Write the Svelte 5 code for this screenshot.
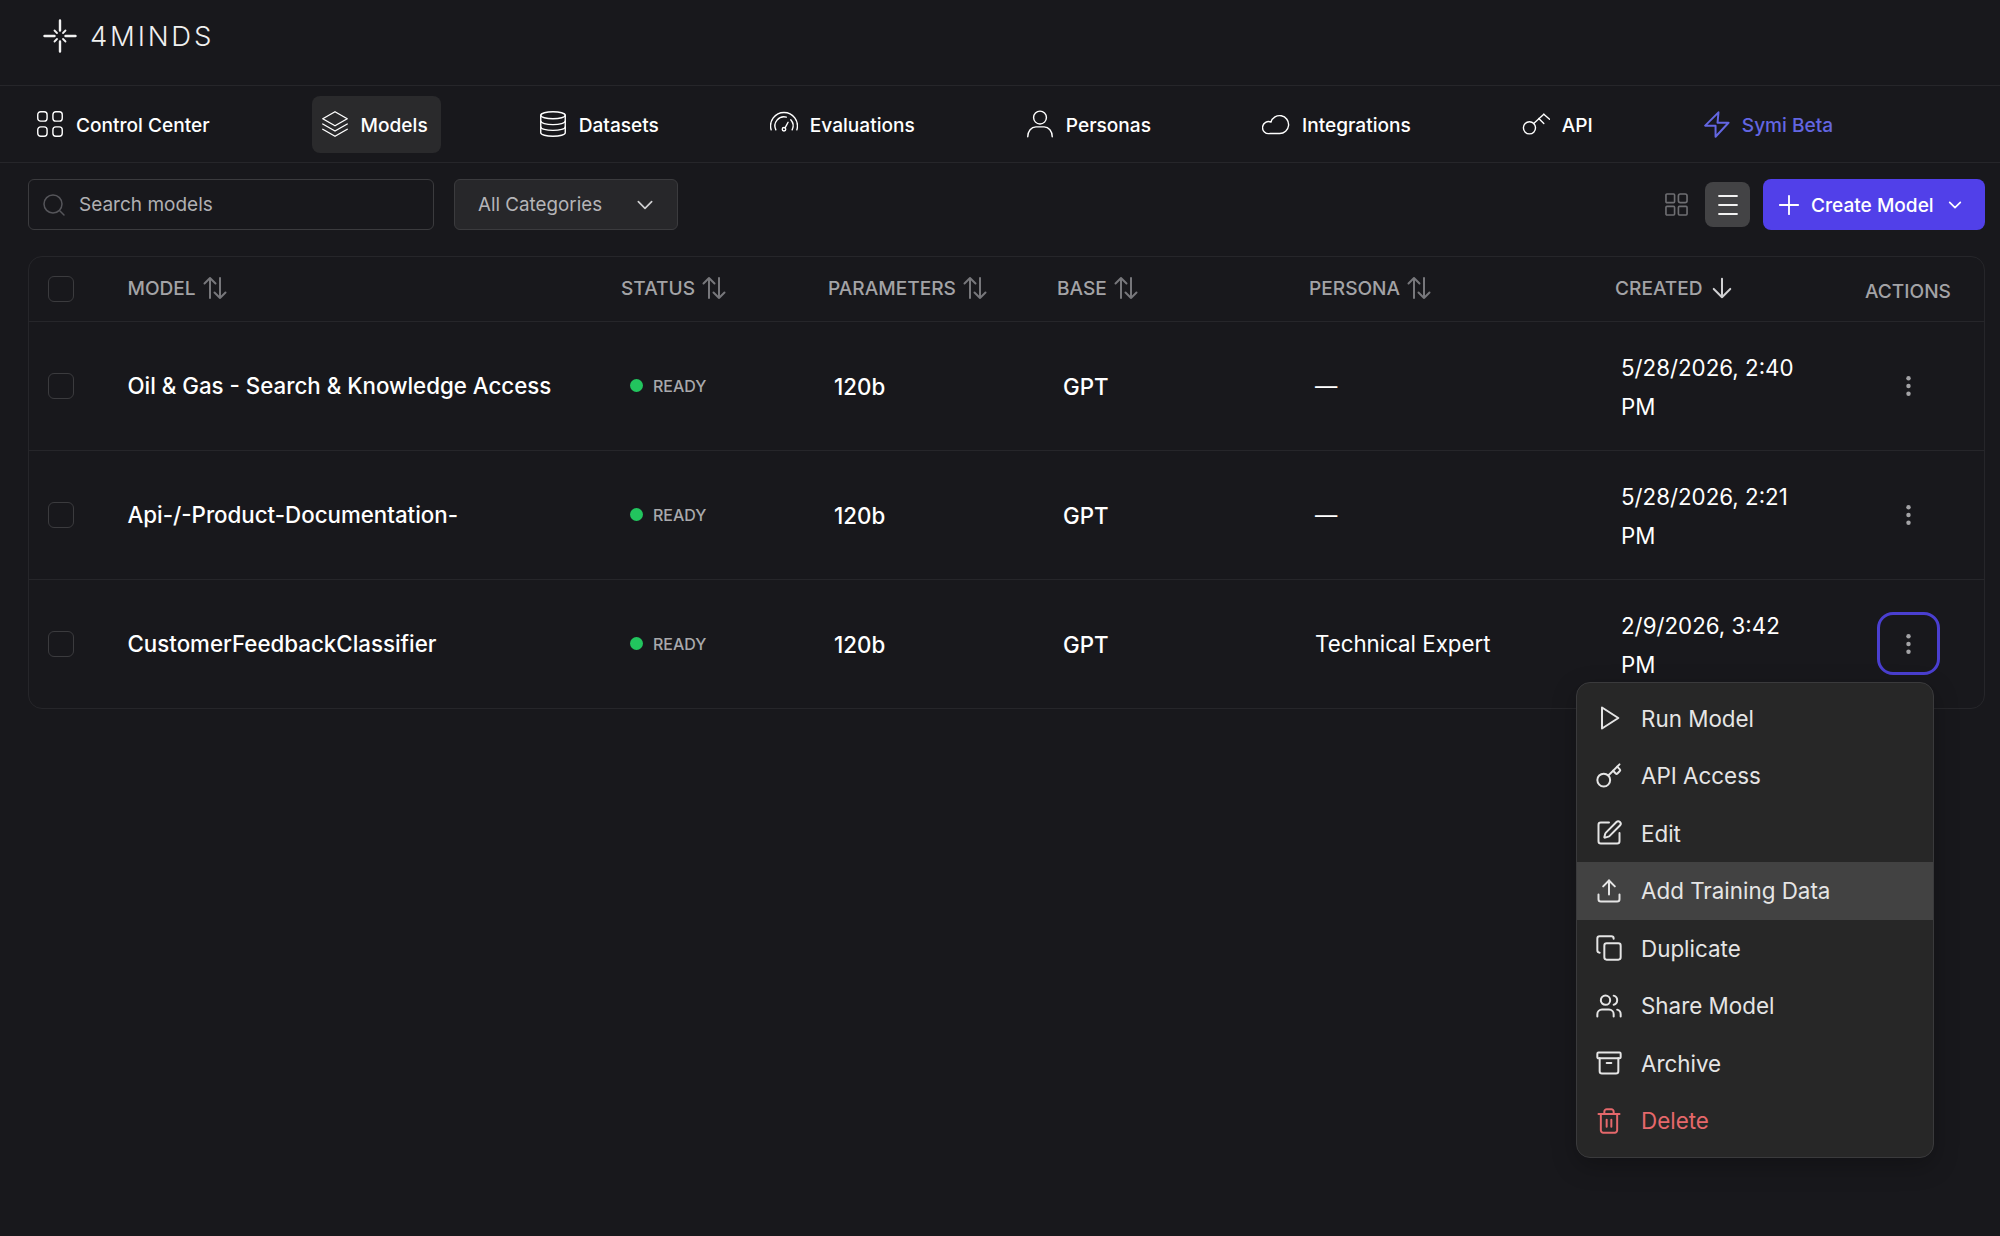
<script lang="ts">
  const icons: Record<string, string[]> = {
    center: ['M4 1.500h3a2.500 2.500 0 0 1 2.500 2.500v3a2.500 2.500 0 0 1-2.500 2.500h-3a2.500 2.500 0 0 1-2.500-2.500v-3a2.500 2.500 0 0 1 2.500-2.500z', 'M17 1.500h3a2.500 2.500 0 0 1 2.500 2.500v3a2.500 2.500 0 0 1-2.500 2.500h-3a2.500 2.500 0 0 1-2.500-2.500v-3a2.500 2.500 0 0 1 2.500-2.500z', 'M4 14.500h3a2.500 2.500 0 0 1 2.500 2.500v3a2.500 2.500 0 0 1-2.500 2.500h-3a2.500 2.500 0 0 1-2.500-2.500v-3a2.500 2.500 0 0 1 2.500-2.500z', 'M17 14.500h3a2.500 2.500 0 0 1 2.500 2.500v3a2.500 2.500 0 0 1-2.500 2.500h-3a2.500 2.500 0 0 1-2.500-2.500v-3a2.500 2.500 0 0 1 2.500-2.500z'],
    layers: ['M12 1.500 22.500 7.500 12 13.500 1.500 7.500z', 'M1.500 12 12 18 22.500 12', 'M1.500 16.500 12 22.500 22.500 16.500'],
    database: ['M12 1.500c5.800 0 10.500 1.300 10.500 3s-4.700 3-10.500 3-10.500-1.300-10.500-3 4.700-3 10.500-3z', 'M1.500 4.500v15c0 1.700 4.700 3 10.500 3s10.500-1.300 10.500-3v-15', 'M1.500 9.500c0 1.700 4.700 3 10.500 3s10.500-1.300 10.500-3', 'M1.500 14.500c0 1.700 4.700 3 10.500 3s10.500-1.300 10.500-3'],
    gauge: ['M1 17A11.500 11.500 0 1 1 23 17', 'M5 17A7.800 7.800 0 0 1 14 6.100', 'M17.800 8.400A7.800 7.800 0 0 1 19 17', 'M12.900 15.300L15.500 10.500', 'M13.500 16.500a1.500 1.500 0 1 1-3 0 1.500 1.500 0 0 1 3 0z'],
    person: ['M17.500 6.500a5.500 5.500 0 1 1-11 0 5.500 5.500 0 0 1 11 0z', 'M1.500 23c0-5 3-8.500 7-8.500h7c4 0 7 3.500 7 8.500'],
    cloud: ['M6.500 20.200H15.100a7.700 7.700 0 1 0-7.380-9.900 5.200 5.200 0 1 0-1.220 9.900Z'],
    apikey: ['M11.600 15.300a5.200 5.200 0 1 1-10.400 0 5.200 5.200 0 0 1 10.400 0z', 'M10 11.500 18.700 3.600', 'M18.700 3.600 23.600 7.900', 'M14.400 7.300 18.700 11.600'],
    zap: ['M12.400 2 1 13.400h8.900l0 9.500L21 10.900h-9.400z'],
    play: ['M6 3 20 12 6 21z'],
    key: ['m15.500 7.500 2.300 2.300a1 1 0 0 0 1.400 0l2.100-2.100a1 1 0 0 0 0-1.400L19 4', 'm21 2-9.600 9.600', 'M13 15.500a5.500 5.500 0 1 1-11 0 5.500 5.500 0 0 1 11 0z'],
    pen: ['M12 3H5a2 2 0 0 0-2 2v14a2 2 0 0 0 2 2h14a2 2 0 0 0 2-2v-7', 'M18.375 2.625a1 1 0 0 1 3 3l-9.013 9.014a2 2 0 0 1-.853.505l-2.873.84a.5.5 0 0 1-.62-.62l.84-2.873a2 2 0 0 1 .506-.852z'],
    upload: ['M21 15v4a2 2 0 0 1-2 2H5a2 2 0 0 1-2-2v-4', 'M17 8l-5-5-5 5', 'M12 3v12'],
    copy: ['M10 8h10a2 2 0 0 1 2 2v10a2 2 0 0 1-2 2H10a2 2 0 0 1-2-2V10a2 2 0 0 1 2-2z', 'M4 16c-1.100 0-2-.9-2-2V4c0-1.100.9-2 2-2h10c1.100 0 2 .9 2 2'],
    users: ['M16 21v-2a4 4 0 0 0-4-4H6a4 4 0 0 0-4 4v2', 'M13 7a4 4 0 1 1-8 0 4 4 0 0 1 8 0z', 'M22 21v-2a4 4 0 0 0-3-3.870', 'M16 3.130a4 4 0 0 1 0 7.750'],
    archive: ['M3 3h18a1 1 0 0 1 1 1v3a1 1 0 0 1-1 1H3a1 1 0 0 1-1-1V4a1 1 0 0 1 1-1z', 'M4 8v11a2 2 0 0 0 2 2h12a2 2 0 0 0 2-2V8', 'M10 12h4'],
    trash: ['M3 6h18', 'M19 6v14c0 1-1 2-2 2H7c-1 0-2-1-2-2V6', 'M8 6V4c0-1 1-2 2-2h4c1 0 2 1 2 2v2', 'M10 11v6', 'M14 11v6'],
  }

  const navItems = [
    { label: 'Control Center', icon: 'center' },
    { label: 'Models', icon: 'layers', active: true },
    { label: 'Datasets', icon: 'database' },
    { label: 'Evaluations', icon: 'gauge' },
    { label: 'Personas', icon: 'person' },
    { label: 'Integrations', icon: 'cloud' },
    { label: 'API', icon: 'apikey' },
    { label: 'Symi Beta', icon: 'zap', accent: true },
  ]

  const columns = [
    { label: 'Model', sort: true },
    { label: 'Status', sort: true },
    { label: 'Parameters', sort: true },
    { label: 'Base', sort: true },
    { label: 'Persona', sort: true },
    { label: 'Created', sort: false },
  ]

  const rows = [
    { name: 'Oil & Gas - Search & Knowledge Access', persona: '—', date: '5/28/2026, 2:40 PM' },
    { name: 'Api-/-Product-Documentation-', persona: '—', date: '5/28/2026, 2:21 PM' },
    { name: 'CustomerFeedbackClassifier', persona: 'Technical Expert', date: '2/9/2026, 3:42 PM', open: true },
  ]

  const menuItems = [
    { label: 'Run Model', icon: 'play' },
    { label: 'API Access', icon: 'key' },
    { label: 'Edit', icon: 'pen' },
    { label: 'Add Training Data', icon: 'upload', hover: true },
    { label: 'Duplicate', icon: 'copy' },
    { label: 'Share Model', icon: 'users' },
    { label: 'Archive', icon: 'archive' },
    { label: 'Delete', icon: 'trash', danger: true },
  ]
</script>

{#snippet icon(name: string, cls: string)}
  <svg class={cls} viewBox="0 0 24 24" fill="none" stroke="currentColor" stroke-linecap="round" stroke-linejoin="round" aria-hidden="true">
    {#each icons[name] as d}<path {d} />{/each}
  </svg>
{/snippet}

{#snippet sortIcon()}
  <svg class="sort" viewBox="0 0 24 24" fill="none" stroke="currentColor" stroke-width="2" stroke-linecap="round" stroke-linejoin="round" aria-hidden="true">
    <path d="M7 22V2M1.500 7.500 7 2l5.500 5.500" />
    <path d="M17 2v20M11.500 16.500 17 22l5.500-5.500" />
  </svg>
{/snippet}

<div class="page">
  <header class="brand">
    <svg class="logo" viewBox="0 0 34 34" fill="none" stroke="currentColor" stroke-linecap="round" aria-hidden="true">
      <path stroke-width="2.400" d="M17 1.500v10M17 22.500v10M1.500 17h10M22.500 17h10" />
      <path stroke-width="1.800" d="M11.500 11.500l2.500 2.500M22.500 11.500l-2.500 2.500M11.500 22.500l2.500-2.500M22.500 22.500l-2.500-2.500" />
    </svg>
    <span class="wordmark">4MINDS</span>
  </header>

  <nav class="nav">
    {#each navItems as item}
      <a class="nav-item" class:active={item.active} class:accent={item.accent} href="#top">
        {@render icon(item.icon, 'nav-icon')}
        <span>{item.label}</span>
      </a>
    {/each}
  </nav>

  <div class="toolbar">
    <label class="search">
      <svg class="search-icon" viewBox="0 0 24 24" fill="none" stroke="currentColor" stroke-width="1.500" stroke-linecap="round" aria-hidden="true">
        <circle cx="11" cy="11" r="9" /><path d="m18 18 4 4" />
      </svg>
      <input placeholder="Search models" />
    </label>
    <button class="select">
      <span>All Categories</span>
      <svg class="chev" viewBox="0 0 24 24" fill="none" stroke="currentColor" stroke-width="2" stroke-linecap="round" stroke-linejoin="round" aria-hidden="true"><path d="m4 8 8 8 8-8" /></svg>
    </button>
    <div class="spacer"></div>
    <button class="view" aria-label="Grid view">
      <svg viewBox="0 0 24 24" fill="none" stroke="currentColor" stroke-width="1.700" aria-hidden="true">
        <rect x="1" y="1" width="9" height="9" rx="1" /><rect x="14" y="1" width="9" height="9" rx="2" />
        <rect x="1" y="14" width="9" height="9" rx="1" /><rect x="14" y="14" width="9" height="9" rx="1" />
      </svg>
    </button>
    <button class="view on" aria-label="List view">
      <svg viewBox="0 0 24 24" fill="none" stroke="currentColor" stroke-width="1.800" stroke-linecap="round" aria-hidden="true"><path d="M3 3h18M3 12h18M3 21h18" /></svg>
    </button>
    <button class="create">
      <svg class="plus" viewBox="0 0 24 24" fill="none" stroke="currentColor" stroke-width="2" stroke-linecap="round" aria-hidden="true"><path d="M12 2v20M2 12h20" /></svg>
      <span>Create Model</span>
      <svg class="create-chev" viewBox="0 0 24 24" fill="none" stroke="currentColor" stroke-width="2.500" stroke-linecap="round" stroke-linejoin="round" aria-hidden="true"><path d="m4 8 8 8 8-8" /></svg>
    </button>
  </div>

  <div class="table-wrap">
    <table>
      <colgroup>
        <col class="c-check" /><col class="c-model" /><col class="c-status" /><col class="c-params" />
        <col class="c-base" /><col class="c-persona" /><col class="c-created" /><col />
      </colgroup>
      <thead>
        <tr>
          <th class="check-cell"><span class="check"></span></th>
          {#each columns as col}
            <th>
              <span class="th-inner">
                {col.label}
                {#if col.sort}
                  {@render sortIcon()}
                {:else}
                  <svg class="down" viewBox="0 0 24 24" fill="none" stroke="currentColor" stroke-width="2.200" stroke-linecap="round" stroke-linejoin="round" aria-hidden="true"><path d="M12 2v20M3 13l9 9 9-9" /></svg>
                {/if}
              </span>
            </th>
          {/each}
          <th class="th-actions">Actions</th>
        </tr>
      </thead>
      <tbody>
        {#each rows as row}
          <tr>
            <td class="check-cell"><span class="check"></span></td>
            <td class="name">{row.name}</td>
            <td><span class="status"><i class="dot"></i>READY</span></td>
            <td class="pad num">120b</td>
            <td class="pad num">GPT</td>
            <td class="pad">{row.persona}</td>
            <td class="pad date">{row.date}</td>
            <td class="actions">
              <button class="more" class:focus={row.open} aria-label="More actions">
                <svg viewBox="0 0 4 18" fill="currentColor" aria-hidden="true"><circle cx="2" cy="2" r="2" /><circle cx="2" cy="9" r="2" /><circle cx="2" cy="16" r="2" /></svg>
              </button>
              {#if row.open}
                <div class="menu">
                  {#each menuItems as m}
                    <div class="menu-item" class:hover={m.hover} class:danger={m.danger}>
                      {@render icon(m.icon, 'menu-icon')}
                      <span>{m.label}</span>
                    </div>
                  {/each}
                </div>
              {/if}
            </td>
          </tr>
        {/each}
      </tbody>
    </table>
  </div>
</div>

<style>
  :global(body) {
    background: #18181c;
    color: #fff;
    font-family: Inter, "Liberation Sans", sans-serif;
  }

  .page {
    min-height: 1236px;
    background: #18181c;
  }

  /* top bar */
  .brand {
    display: flex;
    align-items: center;
    gap: 13px;
    height: 86px;
    padding: 0 0 13px 43px;
    box-sizing: border-box;
    border-bottom: 1px solid #26262a;
  }
  .logo { width: 34px; height: 34px; color: #f1f1f1; }
  .wordmark {
    font-size: 27.500px;
    font-weight: 300;
    letter-spacing: 2.800px;
    color: #f0f0f0;
  }

  .nav {
    display: flex;
    align-items: center;
    gap: 89px;
    height: 77px;
    padding-left: 27px;
    box-sizing: border-box;
    border-bottom: 1px solid #26262a;
  }
  .nav-item {
    display: flex;
    align-items: center;
    gap: 12px;
    height: 57px;
    padding: 0 13px 0 9px;
    border-radius: 8px;
    color: #fff;
    text-decoration: none;
    font-size: 19.100px;
    font-weight: 500;
    box-sizing: border-box;
  }
  .nav-item span { padding-top: 2px; }
  .nav-item.active { background: #2a2a2c; }
  .nav-item.accent { gap: 10px; color: #6366e1; }
  .nav-item.accent .nav-icon { stroke-width: 1.700; }
  .nav-icon { width: 28px; height: 28px; stroke-width: 1.200; flex: none; }

  /* toolbar */
  .toolbar {
    display: flex;
    align-items: center;
    gap: 20px;
    padding: 16px 15px 0 28px;
  }
  .search {
    display: flex;
    align-items: center;
    gap: 13px;
    width: 406px;
    height: 51px;
    padding-left: 13px;
    box-sizing: border-box;
    border: 1px solid #3b3b3e;
    border-radius: 6px;
  }
  .search-icon { width: 24px; height: 24px; color: #55555a; flex: none; }
  .search input {
    flex: 1;
    min-width: 0;
    padding: 0;
    background: none;
    border: 0;
    outline: 0;
    font: 400 19px Inter, sans-serif;
    color: #b5b5b8;
  }
  .search input::placeholder { color: #b0b0b3; opacity: 1; }
  .select {
    display: flex;
    align-items: center;
    justify-content: space-between;
    width: 224px;
    height: 51px;
    padding: 0 22px 0 23px;
    box-sizing: border-box;
    background: #27272a;
    border: 1px solid #3b3b3e;
    border-radius: 6px;
    color: #b5b5b8;
    font: 400 18.800px Inter, sans-serif;
  }
  .chev { width: 20px; height: 20px; color: #d0d0d2; }
  .spacer { flex: 1; }
  .view {
    display: grid;
    place-items: center;
    width: 45px;
    height: 45px;
    padding: 0;
    border: 0;
    border-radius: 8px;
    background: none;
    color: #6e6e72;
  }
  .view svg { width: 24px; height: 24px; }
  .view:not(.on) svg { width: 23px; height: 23px; }
  .view.on { margin-left: -14px; background: #434345; color: #f2f2f2; }
  .create {
    display: flex;
    align-items: center;
    width: 222px;
    height: 51px;
    margin-left: -7px;
    padding: 0 0 0 15px;
    box-sizing: border-box;
    border: 0;
    border-radius: 8px;
    background: #5140e9;
    color: #fff;
    font: 500 19.100px Inter, sans-serif;
  }
  .plus { width: 22px; height: 22px; margin-right: 11px; }
  .create-chev { width: 16px; height: 16px; margin-left: 13px; }

  /* table */
  .table-wrap {
    margin: 26px 15px 0 28px;
    border: 1px solid #26262a;
    border-radius: 14px;
  }
  table {
    width: 100%;
    table-layout: fixed;
    border-collapse: collapse;
  }
  .c-check { width: 98.500px; }
  .c-model { width: 493.500px; }
  .c-status { width: 207px; }
  .c-params { width: 229px; }
  .c-base { width: 252px; }
  .c-persona { width: 306px; }
  .c-created { width: 250px; }

  th {
    box-sizing: border-box;
    height: 64px;
    padding: 0 0 2px;
    text-align: left;
    font-size: 19.100px;
    font-weight: 500;
    text-transform: uppercase;
    color: #a3a3a6;
    border-bottom: 1px solid #26262a;
  }
  th.check-cell { padding-bottom: 0; }
  .th-inner { display: inline-flex; align-items: center; gap: 7px; }
  .th-actions { padding: 5px 0 0; }
  .sort { width: 24px; height: 24px; color: #77777b; }
  .down { width: 22px; height: 22px; margin-left: 1px; color: #d0d0d2; }

  td {
    height: 128px;
    padding: 0;
    font-size: 22.300px;
    color: #fff;
    border-bottom: 1px solid #26262a;
  }
  tbody tr:last-child td { border-bottom: 0; }
  .check-cell { padding-left: 19px; }
  .check {
    display: block;
    width: 26px;
    height: 26px;
    box-sizing: border-box;
    border: 1px solid #3b3b3e;
    border-radius: 6px;
  }
  .name { font-weight: 500; }
  .pad { padding-left: 6px; }
  .num { height: 126px; padding-top: 2px; font-weight: 500; }
  .date { height: 124px; padding-top: 4px; line-height: 38.500px; padding-right: 60px; }

  .status {
    display: flex;
    align-items: center;
    gap: 10px;
    padding-left: 9px;
    font-size: 16px;
    font-weight: 500;
    color: #a9a9ac;
  }
  .dot {
    width: 13px;
    height: 13px;
    border-radius: 50%;
    background: #22c55e;
  }

  .actions { position: relative; }
  .more {
    display: grid;
    place-items: center;
    width: 63px;
    height: 63px;
    margin-left: 12px;
    padding: 0;
    border: 3px solid transparent;
    border-radius: 16px;
    background: none;
    color: #a3a3a6;
  }
  .more.focus { border-color: #4a3fd0; }
  .more svg { width: 5px; height: 20px; }

  .menu {
    position: absolute;
    top: 102px;
    right: 50px;
    width: 358px;
    box-sizing: border-box;
    padding: 7px 0;
    background: #272727;
    border: 1px solid #3a3a3c;
    border-radius: 14px;
    box-shadow: 0 8px 24px rgba(0, 0, 0, 0.25);
    z-index: 10;
  }
  .menu-item {
    display: flex;
    align-items: center;
    gap: 18px;
    height: 57.500px;
    padding-left: 18px;
    font-size: 22.400px;
    color: #e5e5e5;
  }
  .menu-item.hover { background: #424242; }
  .menu-item.danger { color: #e5686b; }
  .menu-icon { width: 28px; height: 28px; stroke-width: 1.700; flex: none; }
</style>
